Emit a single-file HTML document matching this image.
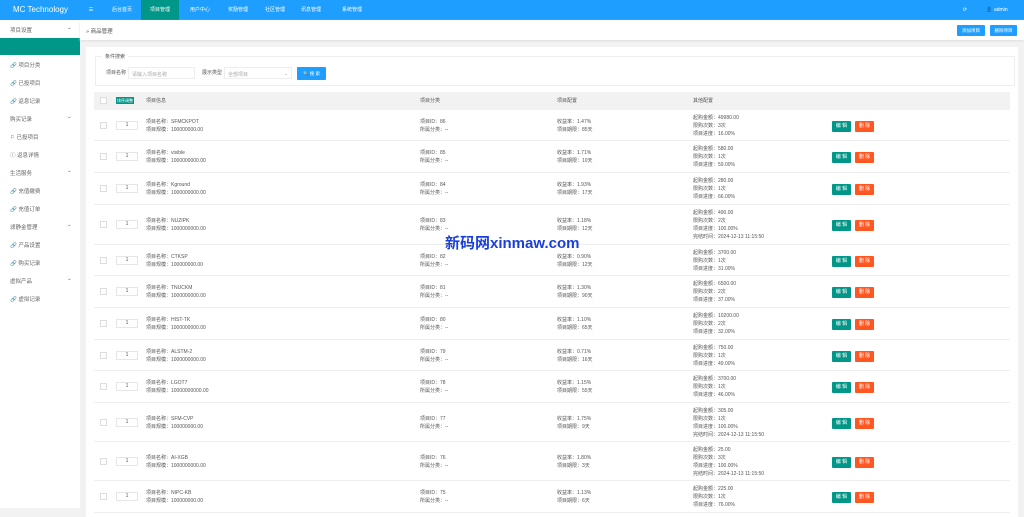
<!DOCTYPE html><html><head><meta charset="utf-8"><style>
*{margin:0;padding:0;box-sizing:border-box}
body{width:1024px;height:508px;overflow:hidden;background:#f2f2f2;font-family:"Liberation Sans","Noto Sans CJK SC",sans-serif;font-size:5px;color:#555;position:relative}
.top{position:absolute;left:0;top:0;width:1024px;height:20px;background:#1e9fff;color:#fff}
.logo{position:absolute;left:13px;top:5px;font-size:8px}
.nav{position:absolute;top:0;height:20px;line-height:20px;font-size:5px;color:#fff;text-align:center}
.side{position:absolute;left:0;top:20px;width:80px;height:488px;background:#fff}
.si{position:absolute;left:10px;font-size:5.5px;color:#666}
.bc{position:absolute;left:80px;top:20px;width:944px;height:20px;background:#fff;box-shadow:0 1px 2px #ddd}
.card{position:absolute;left:86px;top:47px;width:932px;height:470px;background:#fff}
.btn{position:absolute;height:11px;line-height:11px;color:#fff;font-size:4.5px;text-align:center;border-radius:1px}
.row{position:absolute;left:94px;width:916px;border-bottom:1px solid #eee}
.cb{position:absolute;left:6px;width:7px;height:7px;border:1px solid #ddd;background:#fff}
.inp{position:absolute;left:22px;width:22px;height:9px;border:1px solid #e6e6e6;text-align:center;line-height:7px}
.c{position:absolute;line-height:8px;white-space:nowrap}
.e{position:absolute;left:738px;width:19px;height:11px;background:#009688;color:#fff;text-align:center;line-height:11px;border-radius:1px}
.d{position:absolute;left:761px;width:19px;height:11px;background:#ff5722;color:#fff;text-align:center;line-height:11px;border-radius:1px}
</style></head><body>
<div class="top"><div class="logo">MC Technology</div>
<div class="nav" style="left:84px;width:14px">☰</div>
<div class="nav" style="left:104px;width:36px">后台首页</div>
<div class="nav" style="left:141px;width:38px;background:#009688">项目管理</div>
<div class="nav" style="left:182px;width:36px">用户中心</div>
<div class="nav" style="left:220px;width:36px">奖励管理</div>
<div class="nav" style="left:257px;width:36px">社区管理</div>
<div class="nav" style="left:293px;width:36px">讯息管理</div>
<div class="nav" style="left:334px;width:36px">系统管理</div>
<div class="nav" style="left:958px;width:14px">⟳</div>
<div class="nav" style="left:982px;width:30px">👤 admin</div></div>
<div class="side">
<div class="si" style="top:6px">项目设置</div><div class="si" style="left:67px;top:5px">⌄</div>
<div style="position:absolute;left:0;top:18px;width:80px;height:17px;background:#009688"></div>
<div class="si" style="top:41px">🔗 项目分类</div>
<div class="si" style="top:59px">🔗 已投项目</div>
<div class="si" style="top:77px">🔗 返息记录</div>
<div class="si" style="top:95px">购买记录</div><div class="si" style="left:67px;top:94px">⌄</div>
<div class="si" style="top:113px">⚐ 已投项目</div>
<div class="si" style="top:131px">ⓘ 返息详情</div>
<div class="si" style="top:149px">生活服务</div><div class="si" style="left:67px;top:148px">⌄</div>
<div class="si" style="top:167px">🔗 充值缴费</div>
<div class="si" style="top:185px">🔗 充值订单</div>
<div class="si" style="top:203px">滤静金管理</div><div class="si" style="left:67px;top:202px">⌄</div>
<div class="si" style="top:221px">🔗 产品设置</div>
<div class="si" style="top:239px">🔗 购买记录</div>
<div class="si" style="top:257px">虚拟产品</div><div class="si" style="left:67px;top:256px">⌄</div>
<div class="si" style="top:275px">🔗 虚拟记录</div>
</div>
<div class="bc"><div style="position:absolute;left:6px;top:7px;font-size:5.5px;color:#555">» 商品管理</div>
<div class="btn" style="left:877px;top:5px;width:28px;background:#1e9fff">添加项目</div>
<div class="btn" style="left:910px;top:5px;width:27px;background:#1e9fff">删除项目</div></div>
<div class="card">
<div style="position:absolute;left:9px;top:9px;width:920px;height:30px;border:1px solid #eee"></div>
<div style="position:absolute;left:16px;top:6px;background:#fff;padding:0 3px;font-size:5px">条件搜索</div>
<div class="c" style="left:20px;top:22px">项目名称</div>
<div style="position:absolute;left:42px;top:20px;width:67px;height:12px;border:1px solid #eee;padding:3px 3px;color:#aaa">请输入项目名称</div>
<div class="c" style="left:116px;top:22px">展示类型</div>
<div style="position:absolute;left:138px;top:20px;width:68px;height:12px;border:1px solid #eee;padding:3px 3px;color:#aaa">全部项目<span style="float:right">⌄</span></div>
<div class="btn" style="left:211px;top:20px;width:29px;height:13px;line-height:13px;background:#1e9fff">🔍 搜 索</div>
</div>
<div class="row" style="top:92px;height:18px;background:#f2f2f2;border:none">
<div class="cb" style="top:5px"></div>
<div style="position:absolute;left:22px;top:5px;width:18px;height:7px;background:#009688;color:#fff;font-size:4px;line-height:7px;text-align:center">排序调整</div>
<div class="c" style="left:52px;top:5px">项目信息</div><div class="c" style="left:326px;top:5px">项目分类</div><div class="c" style="left:463px;top:5px">项目配置</div><div class="c" style="left:599px;top:5px">其他配置</div></div>
<div id="rows"></div>
<div style="position:absolute;left:445px;top:232px;font-size:15px;font-weight:bold;color:#1a3fd8;font-family:'Liberation Sans','Noto Sans CJK SC',sans-serif">新码网xinmaw.com</div>
<script>
var d=[["SFMCKPOT","100000000.00",86,"1.47%","85天","49980.00","3次","16.00%",31],
["visible","1000000000.00",85,"1.71%","10天","580.00","1次","59.00%",32],
["Kground","1000000000.00",84,"1.93%","17天","280.00","1次","66.00%",32],
["NUZIPK","1000000000.00",83,"1.18%","12天","490.00","2次","100.00%",40,1],
["CTKSP","100000000.00",82,"0.90%","12天","3700.00","1次","31.00%",31],
["TNUCKM","1000000000.00",81,"1.30%","90天","6500.00","2次","37.00%",32],
["HIST-TK","1000000000.00",80,"1.10%","65天","10200.00","2次","32.00%",32],
["ALSTM-2","1000000000.00",79,"0.71%","16天","750.00","1次","49.00%",31],
["LGOT7","10000000000.00",78,"1.15%","55天","3700.00","1次","46.00%",32],
["SFM-CVP","100000000.00",77,"1.75%","9天","305.00","1次","100.00%",39,1],
["AI-XGB","1000000000.00",76,"1.80%","3天","25.00","3次","100.00%",39,1],
["NIPC-KB","100000000.00",75,"1.13%","6天","225.00","1次","76.00%",32]];
var y=110,h="";d.forEach(function(r){var H=r[8],m=H/2;
var o=r[9]?y+m-16:y+m-12;
h+='<div class="row" style="top:'+y+'px;height:'+H+'px">'+
'<div class="cb" style="top:'+(m-4)+'px"></div><div class="inp" style="top:'+(m-5)+'px">1</div>'+
'<div class="c" style="left:52px;top:'+(m-8)+'px">项目名称：'+r[0]+'<br>项目规模：'+r[1]+'</div>'+
'<div class="c" style="left:326px;top:'+(m-8)+'px">项目ID：'+r[2]+'<br>所属分类：--</div>'+
'<div class="c" style="left:463px;top:'+(m-8)+'px">收益率：'+r[3]+'<br>项目期限：'+r[4]+'</div>'+
'<div class="c" style="left:599px;top:'+(o-y)+'px">起购金额：'+r[5]+'<br>限购次数：'+r[6]+'<br>项目进度：'+r[7]+(r[9]?'<br>完结时间：2024-12-13 11:15:50':'')+'</div>'+
'<div class="e" style="top:'+(m-5)+'px">编 辑</div><div class="d" style="top:'+(m-5)+'px">删 除</div></div>';y+=H;});
document.getElementById('rows').innerHTML=h;
</script>
</body></html>
